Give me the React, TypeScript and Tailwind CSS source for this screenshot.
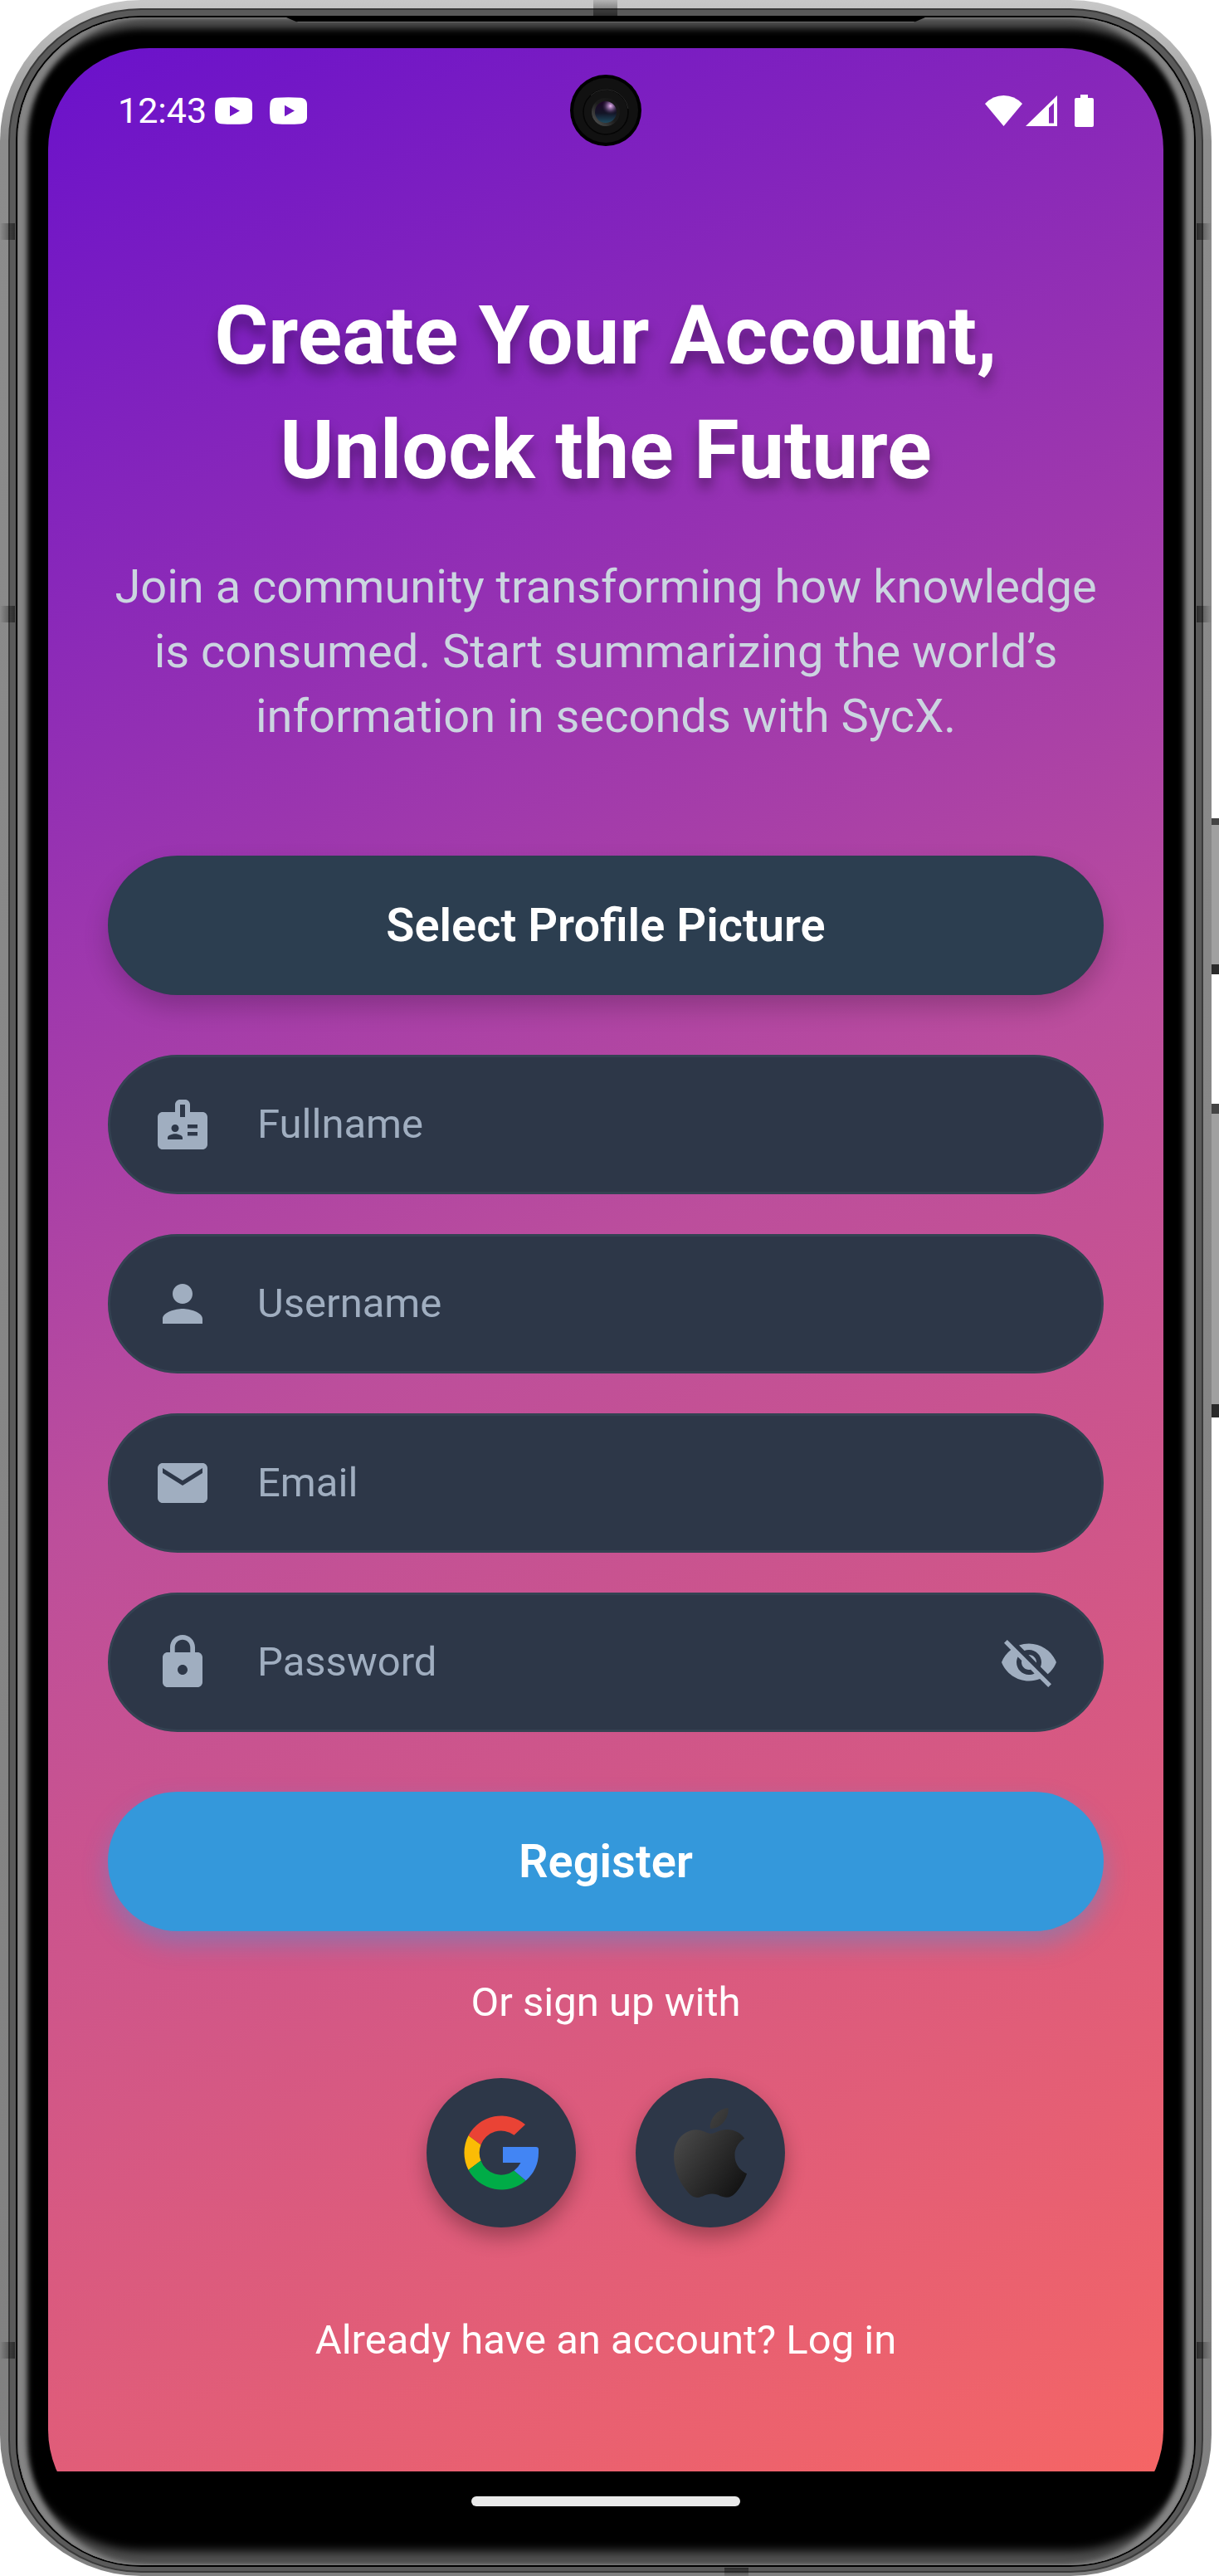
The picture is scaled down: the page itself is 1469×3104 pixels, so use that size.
import { useState } from "react";
import type { ReactNode } from "react";
import { MdBadge, MdEmail, MdLock, MdPerson, MdVisibility, MdVisibilityOff } from "react-icons/md";

function YouTubeIcon() {
  return (
    <svg viewBox="0 0 45 33" className="h-[33px] w-[45px]" aria-hidden="true">
      <path
        fill="#fff"
        fillRule="evenodd"
        d="M8 .8C17 0 28 0 37 .8c5 .4 8 3 8 8v15.4c0 5-3 7.600-8 8-9 .8-20 .8-29 0-5-.4-7.200-3-7.600-8-.5-5-.5-10.400 0-15.400C.8 3.800 3 1.200 8 .8Zm10 9v13.400L30 16.500Z"
      />
    </svg>
  );
}

function StatusBar() {
  return (
    <header className="relative flex h-[150px] items-center justify-between pr-[84px] pl-[84px]">
      <div className="flex items-center gap-[21px]">
        <div className="flex items-center gap-[10px]">
          <span className="font-[Roboto,sans-serif] text-[43px] leading-none text-white">12:43</span>
          <YouTubeIcon />
        </div>
        <YouTubeIcon />
      </div>
      <Camera />
      <div className="flex items-center">
        <svg viewBox="0 0 131 39" className="h-[39px] w-[131px]" fill="#fff" aria-hidden="true">
          <path d="M0 11Q9.500 1 22.500 1T45 11L22.500 38Z" />
          <path fillRule="evenodd" d="M49 38 87 1V38ZM83 10 77 16V34.500H83Z" />
          <path d="M115 0h9v4h5q2 0 2 2v31q0 2-2 2h-19q-2 0-2-2V6q0-2 2-2h5Z" />
        </svg>
      </div>
    </header>
  );
}

function Camera() {
  return (
    <div className="absolute top-1/2 left-1/2 -translate-x-1/2 -translate-y-1/2">
      <svg viewBox="0 0 86 86" className="size-[86px]" aria-hidden="true">
        <defs>
          <linearGradient id="lensRim" x1="0" y1="1" x2="1" y2="0">
            <stop offset="0" stopColor="#5a5a5a" />
            <stop offset="0.5" stopColor="#1c1c1c" />
            <stop offset="1" stopColor="#141414" />
          </linearGradient>
          <linearGradient id="lens" x1="0" y1="0" x2="0" y2="1">
            <stop offset="0" stopColor="#1d0526" />
            <stop offset="0.55" stopColor="#131526" />
            <stop offset="1" stopColor="#1e4a5f" />
          </linearGradient>
          <radialGradient id="lensGlare" cx="0.72" cy="0.22" r="0.4">
            <stop offset="0" stopColor="#efb8f8" />
            <stop offset="0.45" stopColor="#8d6a9f" stopOpacity="0.7" />
            <stop offset="1" stopColor="#2a2040" stopOpacity="0" />
          </radialGradient>
        </defs>
        <circle cx="43" cy="43" r="43" fill="#000" />
        <circle cx="43" cy="43" r="39" fill="#111" />
        <circle cx="43" cy="45" r="27" fill="#131313" stroke="#050505" strokeWidth="1.500" />
        <path d="M25 25A27 27 0 0 1 70 41" fill="none" stroke="#2a2a2a" />
        <circle cx="43" cy="45" r="17" fill="url(#lensRim)" />
        <circle cx="43" cy="45" r="13" fill="url(#lens)" />
        <circle cx="43" cy="45" r="13" fill="url(#lensGlare)" />
      </svg>
    </div>
  );
}

function GoogleLogo() {
  return (
    <svg viewBox="-45 -45 90 90" className="size-[90px]" aria-hidden="true">
      <path fill="#ea4335" d="M-39.500-20.700A45 45 0 0 1 29-34L15.500-21.300A26 26 0 0 0-24.500-9.500Z" />
      <path fill="#fbbc05" d="M-39.500-20.700A45 45 0 0 0-39.500 20.700L-24.500 9.500A26 26 0 0 1-24.500-9.500Z" />
      <path fill="#00ac47" d="M-39.500 20.700A45 45 0 0 0 29.700 33.500L15.500 21.500A26 26 0 0 1-24.500 9.500Z" />
      <path fill="#4285f4" d="M2-7H42Q45-7 45-4V0A45 45 0 0 1 29.700 33.500L15.500 21.500A27 27 0 0 0 23.500 12H2Z" />
    </svg>
  );
}

function AppleLogo() {
  return (
    <svg viewBox="0 0 24 24" className="size-[108px]" aria-hidden="true">
      <defs>
        <linearGradient id="appleFill" x1="0.1" y1="0.2" x2="0.9" y2="0.9">
          <stop offset="0" stopColor="#4a4a4a" />
          <stop offset="1" stopColor="#141414" />
        </linearGradient>
      </defs>
      <path
        fill="url(#appleFill)"
        d="M12.152 6.896c-.948 0-2.415-1.078-3.960-1.040-2.040.027-3.910 1.183-4.961 3.014-2.117 3.675-.546 9.103 1.519 12.090 1.013 1.454 2.208 3.090 3.792 3.039 1.520-.065 2.090-.987 3.935-.987 1.831 0 2.350.987 3.960.948 1.637-.026 2.676-1.480 3.676-2.948 1.156-1.688 1.636-3.325 1.662-3.415-.039-.013-3.182-1.221-3.220-4.857-.026-3.040 2.480-4.494 2.597-4.559-1.429-2.090-3.623-2.324-4.390-2.376-2-.156-3.675 1.090-4.610 1.090zM15.530 3.830c.843-1.012 1.400-2.427 1.245-3.830-1.207.052-2.662.805-3.532 1.818-.780.896-1.454 2.338-1.273 3.714 1.338.104 2.715-.688 3.559-1.701"
      />
    </svg>
  );
}

type FieldProps = { id: string; label: string; type: string; icon: ReactNode; children?: ReactNode };

function Field({ id, label, type, icon, children }: FieldProps) {
  return (
    <div className="flex h-[168px] items-center gap-[54px] rounded-full border-3 border-[#344252] bg-[#2d3748] px-[51px] text-[#a0aec0]">
      <label htmlFor={id} aria-label={label} className="shrink-0">
        {icon}
      </label>
      <input
        id={id}
        type={type}
        placeholder={label}
        className="min-w-0 flex-1 bg-transparent text-[49px] leading-[72px] text-white outline-none placeholder:text-[#a0aec0]"
      />
      {children}
    </div>
  );
}

function SocialButton({ label, children }: { label: string; children: ReactNode }) {
  return (
    <button
      type="button"
      aria-label={label}
      className="flex size-[180px] items-center justify-center rounded-full bg-[#2d3748] shadow-[0_12px_24px_rgba(0,0,0,0.3)]"
    >
      {children}
    </button>
  );
}

function SignUp() {
  const [visible, setVisible] = useState(false);
  return (
    <main className="flex flex-col px-[72px] pt-[127px] pb-[122px]">
      <h1 className="text-center text-[99px] leading-[138px] font-bold text-white [text-shadow:0_12px_15px_rgba(0,0,0,0.35)]">
        <span className="block">Create Your Account,</span>
        <span className="block">Unlock the Future</span>
      </h1>
      <p className="mt-[57px] text-center text-[56px] leading-[78px] text-[#cbd5e0]">
        <span className="block">Join a community transforming how knowledge</span>
        <span className="block">is consumed. Start summarizing the world’s</span>
        <span className="block">information in seconds with SycX.</span>
      </p>
      <form className="mt-[129px] flex flex-col gap-[72px]" onSubmit={(e) => e.preventDefault()}>
        <button
          type="button"
          className="h-[168px] rounded-full bg-[#2c3e50] text-[56px] font-semibold text-white shadow-[0_15px_30px_rgba(0,0,0,0.2)]"
        >
          Select Profile Picture
        </button>
        <div className="flex flex-col gap-[48px]">
          <Field id="fullname" label="Fullname" type="text" icon={<MdBadge className="size-[72px]" />} />
          <Field id="username" label="Username" type="text" icon={<MdPerson className="size-[72px]" />} />
          <Field id="email" label="Email" type="email" icon={<MdEmail className="size-[72px]" />} />
          <Field
            id="password"
            label="Password"
            type={visible ? "text" : "password"}
            icon={<MdLock className="size-[72px]" />}
          >
            <button type="button" aria-label="Toggle password visibility" onClick={() => setVisible(!visible)}>
              {visible ? <MdVisibility className="size-[72px]" /> : <MdVisibilityOff className="size-[72px]" />}
            </button>
          </Field>
        </div>
        <button
          type="submit"
          className="h-[168px] rounded-full bg-[#3498db] text-[56px] font-semibold text-white shadow-[0_15px_30px_rgba(52,152,219,0.4)]"
        >
          Register
        </button>
      </form>
      <p className="mt-[50px] text-center text-[49px] leading-[72px] text-white">Or sign up with</p>
      <div className="mt-[55px] flex justify-center gap-[72px]">
        <SocialButton label="Sign up with Google">
          <GoogleLogo />
        </SocialButton>
        <SocialButton label="Sign up with Apple">
          <AppleLogo />
        </SocialButton>
      </div>
      <a href="#login" className="mt-[100px] self-center text-[49px] leading-[72px] text-white">
        Already have an account? Log in
      </a>
    </main>
  );
}

export default function App() {
  return (
    <div className="relative bg-white pr-[9px] font-[Roboto,sans-serif]">
      {/* Power and volume keys */}
      <div className="absolute top-[986px] right-0 h-[188px] w-[12px] border-t-8 border-b-12 border-t-[#444] border-b-[#2a2a2a] bg-[#a0a0a0]" />
      <div className="absolute top-[1330px] right-0 h-[378px] w-[12px] border-t-12 border-b-16 border-t-[#444] border-b-[#2a2a2a] bg-[#a0a0a0]" />

      {/* Metal frame, groove and glass edge */}
      <div className="relative rounded-[170px] bg-[linear-gradient(to_bottom,#c8c8c8,#8c8c8c_170px,#808080)] px-[10px] pt-[10px] pb-[4px]">
        <div className="rounded-[160px] border-2 border-[#3a3a3a] bg-[#5a5a5a] px-[7px] pt-[7px] pb-[5px]">
          <div className="rounded-[151px] bg-black p-[2px]">
            <div className="rounded-[149px] bg-black px-[37px] pt-[37px] pb-[41px] shadow-[inset_0_0_1px_1px_#777,inset_13px_0_6px_-1px_#858585,inset_-13px_0_6px_-1px_#858585,inset_0_15px_10px_-2px_#505050,inset_0_-21px_12px_-4px_#505050]">
              <div className="overflow-hidden rounded-[122px] bg-black">
                <div className="bg-[linear-gradient(155deg,#6a11cb,#bc4e9c_50%,#f56565)]">
                  <StatusBar />
                  <SignUp />
                </div>
                <nav className="flex h-[72px] items-center justify-center" aria-label="System navigation">
                  <div className="h-[12px] w-[324px] rounded-full bg-[#eaeaea]" />
                </nav>
              </div>
            </div>
          </div>
        </div>

        {/* Earpiece slit */}
        <div className="absolute top-[21px] right-[345px] left-[345px] h-[6px] border-b border-[#6a6a6a] bg-black [clip-path:polygon(0_0,100%_0,calc(100%-14px)_100%,14px_100%)]" />

        {/* Antenna breaks */}
        <div className="absolute top-[269px] left-0 h-[20px] w-[18px] bg-linear-to-r from-transparent to-black/50" />
        <div className="absolute top-[269px] right-0 h-[20px] w-[18px] bg-linear-to-l from-transparent to-black/50" />
        <div className="absolute top-[730px] left-0 h-[20px] w-[18px] bg-linear-to-r from-transparent to-black/50" />
        <div className="absolute top-[730px] right-0 h-[20px] w-[18px] bg-linear-to-l from-transparent to-black/50" />
        <div className="absolute bottom-[262px] left-0 h-[20px] w-[18px] bg-linear-to-r from-transparent to-black/50" />
        <div className="absolute right-0 bottom-[262px] h-[20px] w-[18px] bg-linear-to-l from-transparent to-black/50" />
        <div className="absolute top-0 left-[715px] h-[19px] w-[29px] bg-linear-to-b from-black/10 to-black/50" />
        <div className="absolute bottom-0 left-[873px] h-[10px] w-[29px] bg-linear-to-t from-black/10 to-black/50" />
      </div>
    </div>
  );
}
